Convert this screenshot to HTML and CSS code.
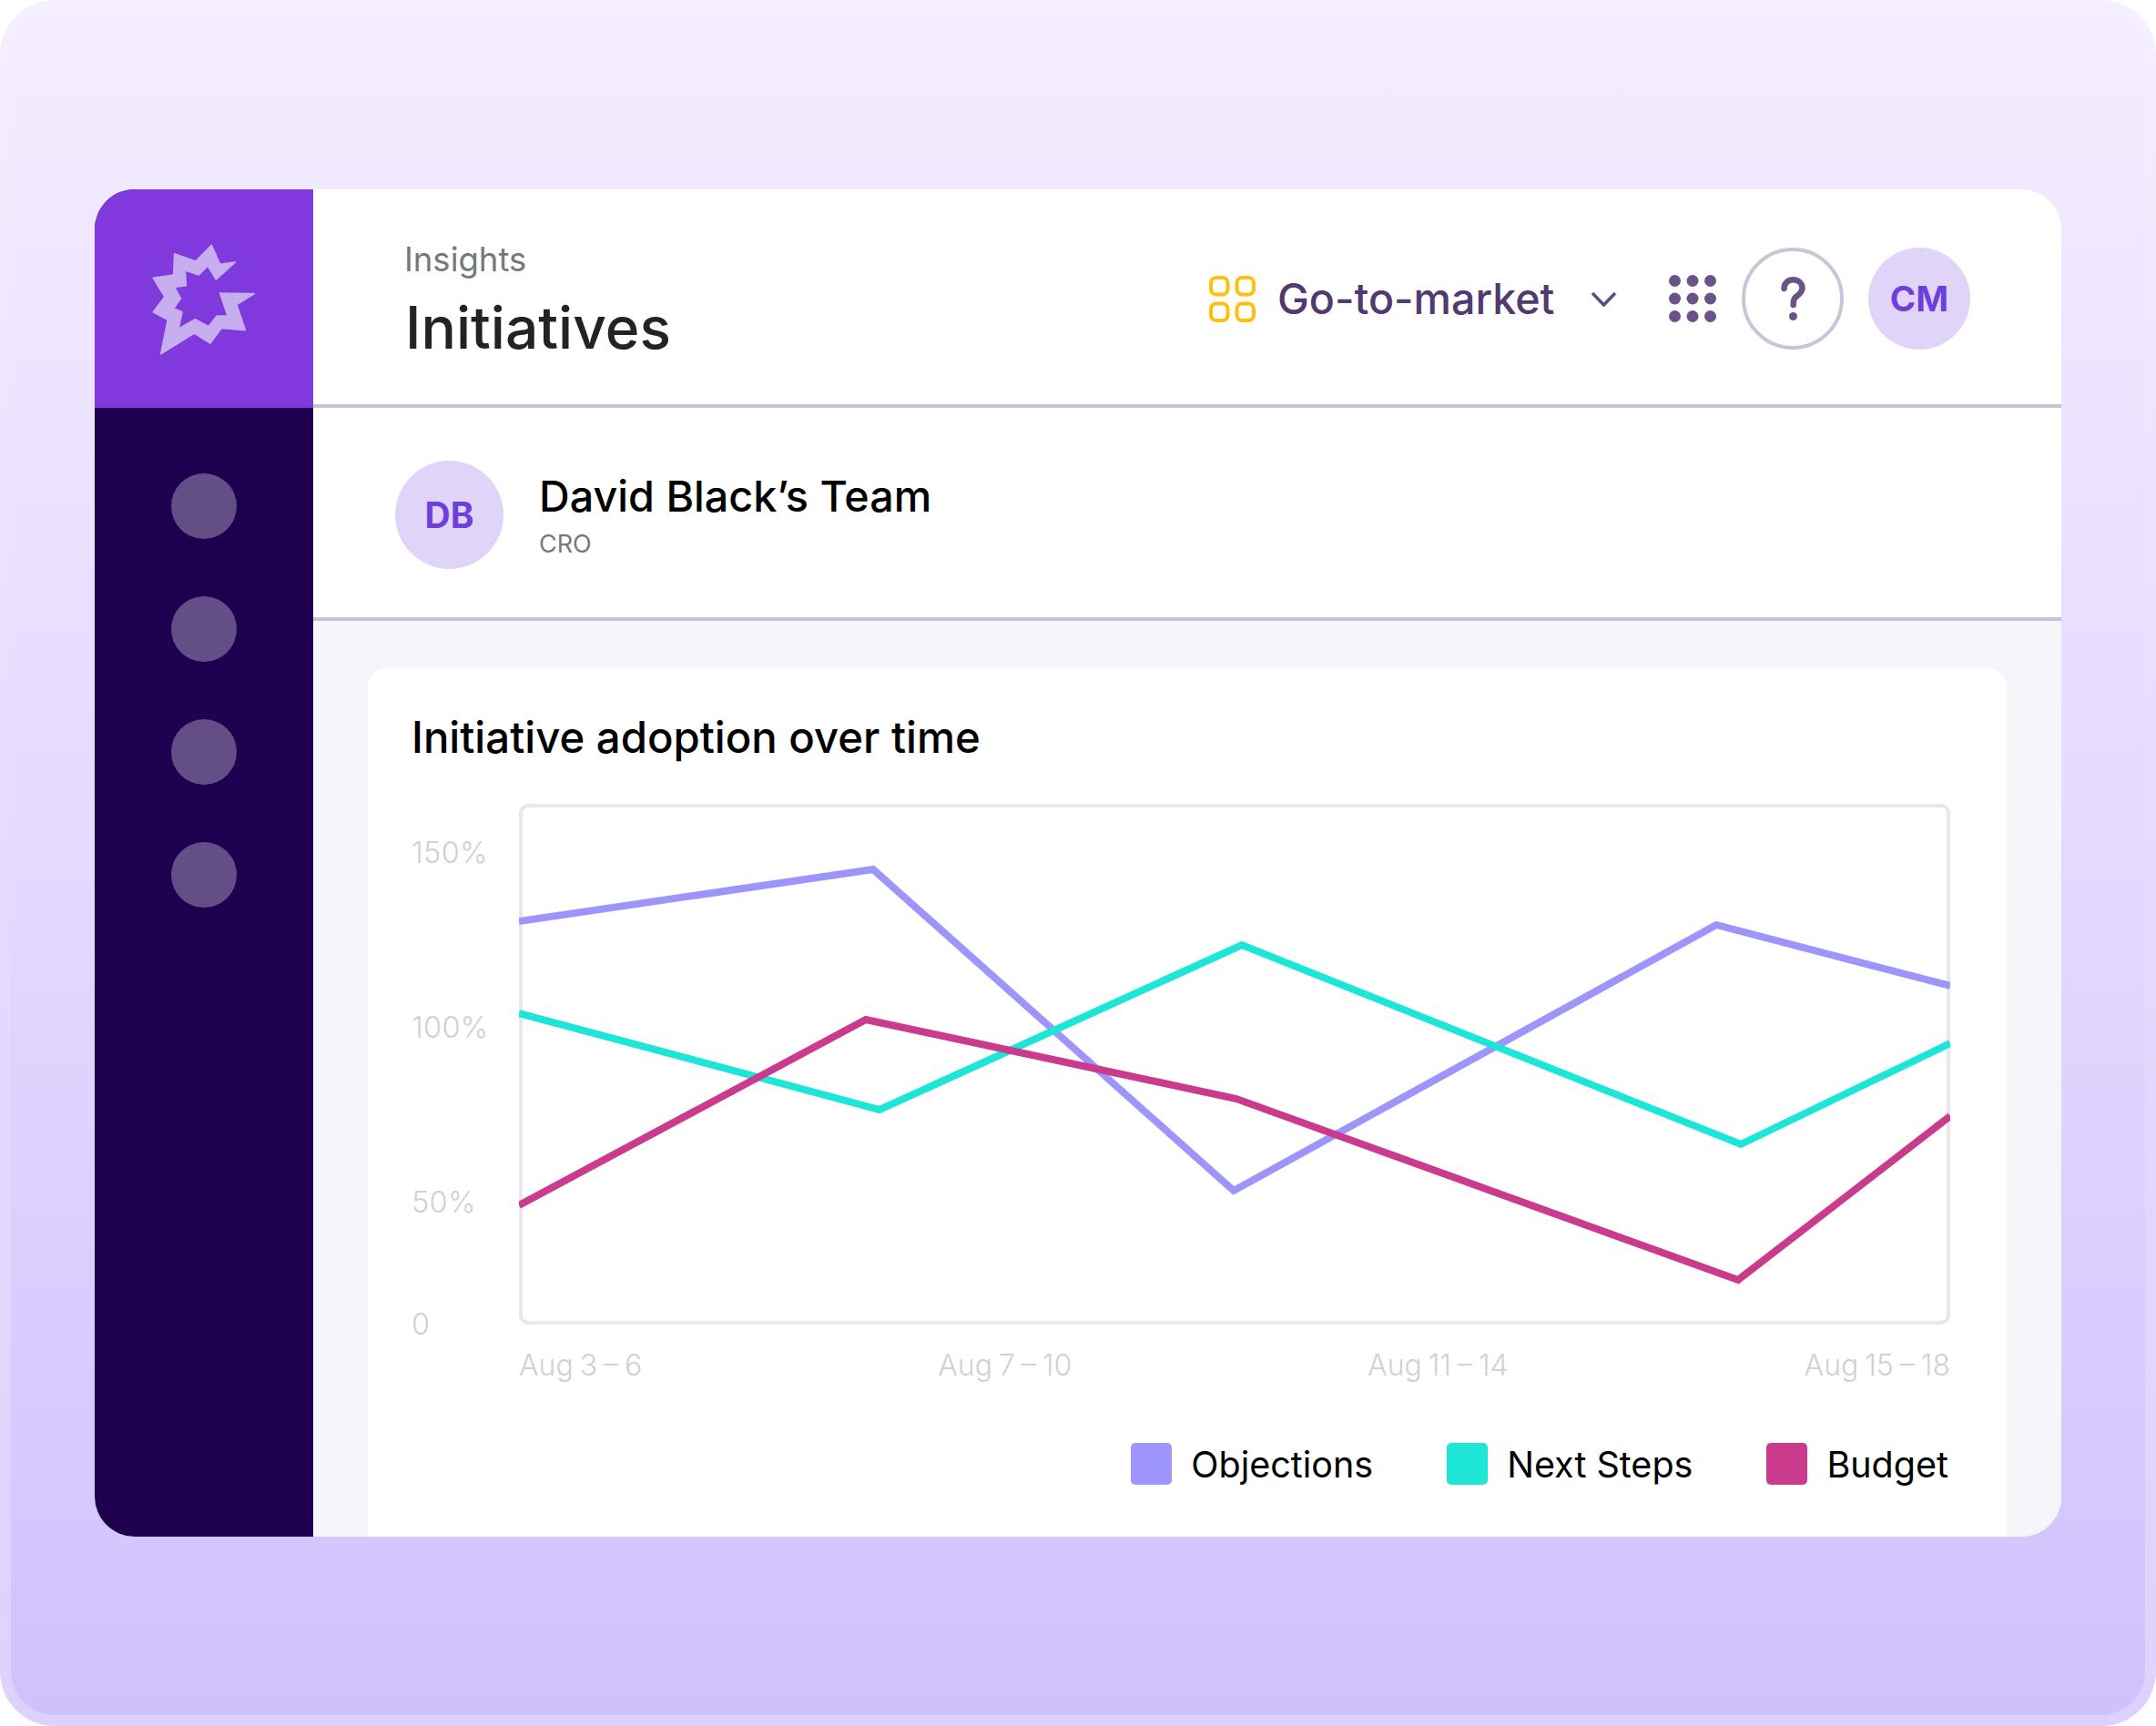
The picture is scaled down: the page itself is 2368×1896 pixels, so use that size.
FILE: index.html
```html
<!DOCTYPE html>
<html lang="en">
<head>
<meta charset="utf-8">
<title>Initiatives</title>
<link rel="stylesheet" href="styles.css">
</head>
<body>
<div class="frame">
  <div class="panel">
    <div class="app">
      <aside class="sidebar">
        <div class="brand">
          <svg class="logo" viewBox="0 0 450 450" aria-hidden="true">
            <path d="M80 410 103 298 55 272 93 222 55 160 122 150 125 80 195 105 247 52 275 115 325 108 262 165 235 120 205 150 160 135 163 185 125 190 145 228 122 260 150 272 138 328 193 296 237 320 265 285 300 285 275 210 388 212 330 248 358 332 280 325 243 375 190 342Z"/>
          </svg>
        </div>
        <nav class="nav">
          <span class="nav-dot"></span>
          <span class="nav-dot"></span>
          <span class="nav-dot"></span>
          <span class="nav-dot"></span>
        </nav>
      </aside>
      <main class="main">
        <header class="topbar">
          <div class="titles">
            <div class="crumb">Insights</div>
            <h1 class="page-title">Initiatives</h1>
          </div>
          <div class="tools">
            <svg class="quad" viewBox="0 0 51 51" aria-hidden="true">
              <rect x="2" y="2" width="18.500" height="18.500" rx="6"/>
              <rect x="30.500" y="2" width="18.500" height="18.500" rx="6"/>
              <rect x="2" y="30.500" width="18.500" height="18.500" rx="6"/>
              <rect x="30.500" y="30.500" width="18.500" height="18.500" rx="6"/>
            </svg>
            <span class="workspace">Go-to-market</span>
            <svg class="chevron" viewBox="0 0 29 17" aria-hidden="true"><path d="M2 2 14.500 15 27 2"/></svg>
            <svg class="grid-icon" viewBox="0 0 52 52" aria-hidden="true">
              <circle cx="6.500" cy="6.500" r="6.500"/><circle cx="26" cy="6.500" r="6.500"/><circle cx="45.500" cy="6.500" r="6.500"/>
              <circle cx="6.500" cy="26" r="6.500"/><circle cx="26" cy="26" r="6.500"/><circle cx="45.500" cy="26" r="6.500"/>
              <circle cx="6.500" cy="45.500" r="6.500"/><circle cx="26" cy="45.500" r="6.500"/><circle cx="45.500" cy="45.500" r="6.500"/>
            </svg>
            <div class="help">
              <svg class="help-mark" viewBox="0 0 27 48" aria-hidden="true">
                <path d="M3.500 13C3.500 7 8 3.300 13.500 3.300 19.500 3.300 23.500 7.500 23.500 12.500 23.500 18 18 20.500 15.500 23 14 24.500 13.700 26 13.700 31"/>
                <circle cx="13.500" cy="43.500" r="4.500"/>
              </svg>
            </div>
            <div class="avatar avatar-small">CM</div>
          </div>
        </header>
        <section class="team">
          <div class="avatar avatar-large">DB</div>
          <div>
            <div class="team-name">David Black’s Team</div>
            <div class="team-role">CRO</div>
          </div>
        </section>
        <section class="content">
          <div class="card">
            <h2 class="card-title">Initiative adoption over time</h2>
            <div class="chart">
              <div class="y-axis">
                <span>150%</span>
                <span>100%</span>
                <span>50%</span>
                <span>0</span>
              </div>
              <div class="plot">
                <svg class="plot-lines" viewBox="570 883 1572 572" aria-hidden="true">
                  <polyline class="line-purple" points="570,1012 959,955 1355,1308 1885,1016 2142,1083"/>
                  <polyline class="line-teal" points="570,1113 966,1219 1364,1038 1912,1257 2142,1146"/>
                  <polyline class="line-pink" points="570,1324 951,1120 1358,1207 1909,1406 2142,1226"/>
                </svg>
              </div>
            </div>
            <div class="x-axis">
              <span>Aug 3 – 6</span>
              <span>Aug 7 – 10</span>
              <span>Aug 11 – 14</span>
              <span>Aug 15 – 18</span>
            </div>
            <div class="legend">
              <div class="legend-item"><span class="swatch swatch-purple"></span><span class="legend-label">Objections</span></div>
              <div class="legend-item"><span class="swatch swatch-teal"></span><span class="legend-label">Next Steps</span></div>
              <div class="legend-item"><span class="swatch swatch-pink"></span><span class="legend-label">Budget</span></div>
            </div>
          </div>
        </section>
      </main>
    </div>
  </div>
</div>
</body>
</html>
```

FILE: styles.css
```css
* { box-sizing: border-box; }
html, body { margin: 0; padding: 0; background: #fff; }
body { width: 2368px; height: 1896px; font-family: Inter, "Liberation Sans", sans-serif; overflow: hidden; }

.frame {
  width: 2368px; height: 1896px; padding: 12px; border-radius: 60px;
  background: linear-gradient(180deg, #f5efff 0%, #e5dbff 50%, #dcd2fd 100%);
}
.panel {
  height: 100%; padding: 196px 92px; border-radius: 48px;
  background: linear-gradient(180deg, #f4edff 0%, #e4d9ff 50%, #cfc2fc 100%);
}
.app { display: flex; height: 1480px; border-radius: 44px; overflow: hidden; background: #fff; }

.sidebar { width: 240px; flex: none; background: #1f0050; }
.brand { height: 240px; display: flex; align-items: center; justify-content: center; padding: 0 0 2px 2px; background: #7f39dd; }
.logo { width: 150px; height: 150px; display: block; }
.logo path { fill: #c6aeef; stroke: #c6aeef; stroke-width: 5; stroke-linejoin: round; }
.nav { display: flex; flex-direction: column; align-items: center; gap: 63px; padding-top: 72px; }
.nav-dot { width: 72px; height: 72px; border-radius: 50%; background: #634f86; }

.main { flex: 1; min-width: 0; display: flex; flex-direction: column; }
.topbar {
  height: 240px; flex: none; display: flex; align-items: center; justify-content: space-between;
  padding: 4px 100px 0 100px; border-bottom: 4px solid #c9c0d6;
}
.titles { padding-top: 5px; }
.crumb { font-size: 36.500px; line-height: 44px; color: #76787d; }
.page-title { margin: 15px 0 0 1px; font-size: 64px; line-height: 76px; font-weight: 500; color: #232326; }
.tools { display: flex; align-items: center; }
.quad { width: 51px; height: 51px; margin-right: 24px; }
.quad rect { fill: none; stroke: #ffbf0c; stroke-width: 4; }
.workspace { font-size: 46.600px; font-weight: 500; color: #52396f; width: 344px; }
.chevron { width: 29px; height: 17px; margin-right: 57px; }
.chevron path { fill: none; stroke: #5f4a7f; stroke-width: 3.500; }
.grid-icon { width: 52px; height: 52px; margin-right: 28px; fill: #6a5487; }
.help {
  width: 112px; height: 112px; margin-right: 27px; border: 4px solid #cbc4d9; border-radius: 50%;
  display: flex; align-items: center; justify-content: center;
}
.help-mark { width: 27px; height: 48px; }
.help-mark path { fill: none; stroke: #6a5487; stroke-width: 6.500; stroke-linecap: round; }
.help-mark circle { fill: #6a5487; }
.avatar { display: flex; align-items: center; justify-content: center; border-radius: 50%; background: #e0d5f9; color: #6f3fdd; font-weight: 700; flex: none; }
.avatar-small { width: 112px; height: 112px; font-size: 38.500px; }
.avatar-large { width: 119px; height: 119px; font-size: 39px; }

.team {
  height: 234px; flex: none; display: flex; align-items: center; gap: 39px;
  padding: 5px 0 0 90px; border-bottom: 4px solid #c9c0d6;
}
.team-name { font-size: 46.700px; line-height: 56px; font-weight: 500; color: #000; }
.team-role { margin-top: 8px; font-size: 27px; line-height: 34px; color: #77787d; }

.content { flex: 1; min-height: 0; overflow: hidden; padding: 52px 60px 0; background: #f5f6fa; }
.card { height: 100%; padding: 48px 62px 0 48px; border-radius: 20px 20px 0 0; background: #fff; }
.card-title { margin: 0; font-size: 47.300px; line-height: 56px; font-weight: 500; color: #000; }

.chart { display: flex; margin-top: 45px; }
.y-axis {
  width: 118px; flex: none; padding-top: 34px; display: grid; grid-template-rows: 192px 192px 134px 20px;
  font-size: 32.500px; line-height: 40px; font-weight: 300; color: #cfd0d9; letter-spacing: 0.3px;
}
.plot { flex: 1; height: 572px; border: 4px solid #e6e8f0; border-radius: 10px; position: relative; }
.plot-lines { position: absolute; top: -4px; left: -4px; width: 1572px; height: 572px; }
.plot-lines polyline { fill: none; stroke-width: 8; stroke-linejoin: miter; }
.line-purple { stroke: #9e95fc; }
.line-teal { stroke: #1de6d8; }
.line-pink { stroke: #ca3a8d; }

.x-axis {
  display: flex; justify-content: space-between; margin: 25px 0 0 118px;
  font-size: 32px; line-height: 40px; font-weight: 300; color: #cfd0d9; word-spacing: -2px;
}
.legend { display: flex; justify-content: flex-end; gap: 81px; margin: 63px 2px 0 0; }
.legend-item { display: flex; align-items: center; gap: 21px; font-size: 39.500px; line-height: 46px; color: #000; }
.legend-label { padding-top: 3px; }
.swatch { width: 45px; height: 46px; border-radius: 5px; }
.swatch-purple { background: #9e95fc; }
.swatch-teal { background: #1de6d8; }
.swatch-pink { background: #ca3a8d; }
```
